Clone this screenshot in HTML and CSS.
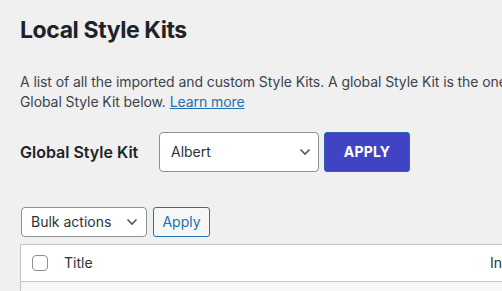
FILE: index.html
```html
<!DOCTYPE html>
<html lang="en">
<head>
    <meta charset="UTF-8">
    <meta name="viewport" content="width=device-width, initial-scale=1.0">
    <title>Local Style Kits</title>
    <link rel="stylesheet" href="styles.css">
</head>
<body>
    <div class="wrap">
        <h1>Local Style Kits</h1>
        <p class="intro">A list of all the imported and custom Style Kits. A global Style Kit is the one applied to all pages of your site. You can select the<br>Global Style Kit below. <a href="#">Learn more</a></p>

        <div class="global-row">
            <label class="global-label" for="globalKit">Global Style Kit</label>
            <div class="select-wrap select-large">
                <select id="globalKit">
                    <option>Albert</option>
                </select>
                <svg class="chevron" width="12" height="8" viewBox="0 0 12 8"><path d="M1.5 1.5 6 6l4.5-4.5" fill="none" stroke="#50575e" stroke-width="1.6"/></svg>
            </div>
            <button class="btn-apply-global">APPLY</button>
        </div>

        <div class="tablenav">
            <div class="select-wrap select-small">
                <select>
                    <option>Bulk actions</option>
                </select>
                <svg class="chevron" width="12" height="8" viewBox="0 0 12 8"><path d="M1.5 1.5 6 6l4.5-4.5" fill="none" stroke="#50575e" stroke-width="1.6"/></svg>
            </div>
            <button class="btn-secondary">Apply</button>
        </div>

        <table class="kits-table">
            <thead>
                <tr>
                    <td class="check-col"><span class="checkbox"></span></td>
                    <th class="title-col">Title</th>
                    <th class="info-col">In</th>
                </tr>
            </thead>
            <tbody>
                <tr><td colspan="3"></td></tr>
            </tbody>
        </table>
    </div>
</body>
</html>
```

FILE: styles.css
```css
body {
    margin: 0;
    background: #f0f0f1;
    color: #1d2327;
    font-family: Inter, "Noto Sans", sans-serif;
    font-size: 14px;
    overflow: hidden;
}

.wrap {
    padding: 16px 0 0 20px;
    width: 640px;
}

h1 {
    margin: 0;
    font-size: 23px;
    line-height: 1.3;
    font-weight: 700;
    letter-spacing: -0.4px;
    color: #1d2327;
}

.intro {
    margin: 26px 0 0;
    font-size: 14px;
    line-height: 20.5px;
    letter-spacing: -0.08px;
    color: #3c434a;
    width: 900px;
}

.intro a {
    color: #2271b1;
}

.global-row {
    display: flex;
    align-items: center;
    margin-top: 19px;
}

.global-label {
    width: 139px;
    font-size: 16px;
    font-weight: 600;
    color: #1d2327;
}

.select-wrap {
    position: relative;
}

.select-wrap select {
    appearance: none;
    -webkit-appearance: none;
    background: #fff;
    border: 1px solid #8c8f94;
    border-radius: 4px;
    font-family: inherit;
    font-size: 14px;
    color: #2c3338;
    box-sizing: border-box;
    margin: 0;
}

.select-wrap .chevron {
    position: absolute;
    top: 50%;
    margin-top: -4px;
    pointer-events: none;
}

.select-large select {
    width: 160px;
    height: 40px;
    padding: 0 24px 0 11px;
}

.select-large .chevron {
    right: 8px;
}

.btn-apply-global {
    margin-left: 5px;
    width: 86px;
    height: 40px;
    background: #4044c4;
    border: 1px solid #2b62b8;
    border-radius: 3px;
    color: #fff;
    font-family: inherit;
    font-size: 14px;
    font-weight: 700;
    letter-spacing: 0.2px;
}

.tablenav {
    display: flex;
    align-items: center;
    gap: 6px;
    margin-top: 35px;
    padding-left: 1px;
}

.select-small select {
    width: 126px;
    height: 30px;
    padding: 0 24px 0 9px;
}

.select-small .chevron {
    right: 9px;
}

.btn-secondary {
    height: 30px;
    width: 57px;
    background: #f6f7f7;
    border: 1px solid #2271b1;
    border-radius: 3px;
    color: #2271b1;
    font-family: inherit;
    font-size: 14px;
    padding: 0;
}

.kits-table {
    margin-top: 7px;
    width: 100%;
    border-collapse: collapse;
    border: 1px solid #c3c4c7;
    background: #fff;
}

.kits-table thead tr {
    height: 37px;
    border-bottom: 1px solid #c3c4c7;
}

.kits-table th {
    text-align: left;
    font-weight: 400;
    font-size: 14px;
    color: #2c3338;
    padding: 0;
}

.check-col {
    width: 32px;
    padding: 0 0 0 11px;
}

.checkbox {
    display: block;
    width: 14px;
    height: 14px;
    border: 1px solid #8c8f94;
    border-radius: 4px;
    background: #fff;
}

.title-col {
    width: 426px;
}

.kits-table tbody tr {
    height: 40px;
    background: #f6f7f7;
}
```
